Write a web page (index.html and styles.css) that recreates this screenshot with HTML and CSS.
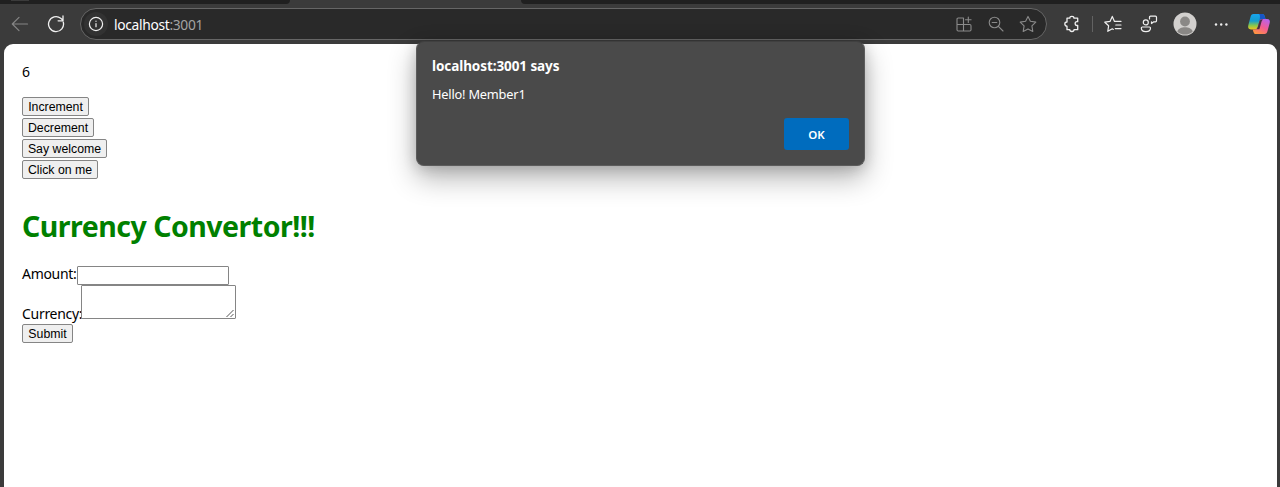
FILE: index.html
```html
<!DOCTYPE html>
<html lang="en">
<head>
<meta charset="utf-8">
<title>localhost:3001</title>
<link rel="stylesheet" href="styles.css">
</head>
<body>
<div class="browser">
  <div class="tabstrip"><div class="tabs-left"><i class="favicon"></i></div><div class="tab"></div><div class="tabs-right"></div></div>
  <header class="toolbar">
    <svg class="icon back" width="18" height="18" viewBox="0 0 18 18"><path d="M16.500 9H1.500M8 2.300 1.300 9 8 15.700"/></svg>
    <svg class="icon reload" width="18" height="18" viewBox="0 0 18 18"><path d="M16.300 7.200A7.500 7.500 0 1 1 13.700 3.200L16 5.300M16 1v4.800h-4.900"/></svg>
    <div class="address">
      <span class="info"><svg class="icon" width="16" height="16" viewBox="0 0 16 16"><circle cx="8" cy="8" r="6.600"/><path d="M8 7.500v3.200M8 5v.3"/></svg></span>
      <span class="url"><b>localhost</b>:3001</span>
      <svg class="icon dim" width="18" height="18" viewBox="0 0 18 18"><path d="M8.500 3H3.200Q2 3 2 4.200v10.600Q2 16 3.200 16h11.600Q16 16 16 14.800V10.700Q16 9.500 14.800 9.500H2M8.500 3v13M13.300 2v5.500M10.500 4.700h5.600"/></svg>
      <svg class="icon dim" width="18" height="18" viewBox="0 0 18 18"><circle cx="7.500" cy="7.500" r="5.300"/><path d="M11.400 11.400 16 16M5.200 7.500h4.600"/></svg>
      <svg class="icon dim" width="18" height="18" viewBox="0 0 18 18"><path d="m9 1.400 2.400 4.900 5.400.8-3.900 3.800.9 5.500L9 13.900l-4.800 2.500.9-5.500-3.900-3.800 5.400-.8z"/></svg>
    </div>
    <svg class="icon puzzle" width="18" height="18" viewBox="0 0 18 18"><path d="M4 3.200h2.800C6.800.8 11 .8 11 3.200h3.700V6.700h-.7c-2.500 0-2.500 3.800 0 3.800h.7v4.200H11c0 2.400-4.200 2.400-4.200 0H4v-3.500C1.100 11.200 1.100 7 4 7z"/></svg>
    <i class="divider"></i>
    <svg class="icon favs" width="18" height="18" viewBox="0 0 18 18"><path d="M11 6.400H17M11.800 10H17M11.300 13.600H17M12 6.400H10.500L8.300 1.400 6 6.400l-5.200.8 3.800 3.600-.8 5.500 4.500-2.500 1 .6"/></svg>
    <svg class="icon people" width="18" height="18" viewBox="0 0 18 18"><circle cx="5.800" cy="7.400" r="2.500"/><path d="M2.300 12h7.200q1 0 1 1c0 4.800-9.200 4.800-9.200 0q0-1 1-1zM9.500 4V2.200q0-1 1-1h5q1 0 1 1v3.600q0 1-1 1h-1.700L11.500 8.500V6.800"/></svg>
    <svg class="avatar" width="24" height="24" viewBox="0 0 24 24"><circle cx="12" cy="12" r="11.500" fill="#d2d0ce"/><circle cx="12" cy="9.500" r="4.900" fill="#8a8886"/><path d="M4.300 19.400c1.700-5.600 13.700-5.600 15.400 0A11 11 0 0 1 4.300 19.400z" fill="#8a8886"/></svg>
    <svg class="dots" width="16" height="16" viewBox="0 0 16 16" fill="#eee"><circle cx="3" cy="8.500" r="1.200"/><circle cx="8.200" cy="8.500" r="1.200"/><circle cx="13.400" cy="8.500" r="1.200"/></svg>
    <svg class="copilot" width="24" height="24" viewBox="0 0 24 24">
      <defs>
        <linearGradient id="cool" x1="0" y1="0" x2="0" y2="1"><stop stop-color="#18a5ef"/><stop offset=".45" stop-color="#159dcc"/><stop offset=".75" stop-color="#8bc84a"/><stop offset="1" stop-color="#f2c51c"/></linearGradient>
        <linearGradient id="warm" x1=".8" y1="0" x2=".2" y2="1"><stop stop-color="#b862ed"/><stop offset=".5" stop-color="#f35c93"/><stop offset="1" stop-color="#ff963d"/></linearGradient>
      </defs>
      <path d="M6.500 2h8.600c1.600 0 2.200 1 2.700 2.600L18.500 7h-3c-2 0-2.700 1-3.200 2.700l-1.600 5.600c-.5 1.500-1.400 2.200-3 2.200H4c-2.600 0-3.300-1.900-2.700-4.200L3.500 5C4 3 4.700 2 6.500 2z" fill="url(#cool)"/>
      <path d="M12 2h3.100c1.600 0 2.200 1 2.700 2.600L18.500 7h-3c-2 0-2.700 1-3.200 2.700C13 6 13.500 3 12 2z" fill="#1755c7"/>
      <path d="M17.500 22H9c-1.600 0-2.200-1-2.700-2.600l-.6-1.900h2c1.600 0 2.500-.7 3-2.200l1.600-5.600C12.800 8 13.500 7 15.500 7H20c2.600 0 3.300 1.700 2.700 4l-2.200 8c-.5 2-1.200 3-3 3z" fill="url(#warm)"/>
      <path d="M14.200 7.500c-1.200.5-1.600 1.300-1.900 2.200L10.700 15.300c-.4 1-.8 1.600-1.500 1.900h3.200l1.900-6.700c.3-1.200.8-2.300 2-3z" fill="#45303f"/>
    </svg>
  </header>
  <main class="page">
    <p class="count">6</p>
    <div class="buttons">
      <button class="btn increment">Increment</button>
      <button class="btn decrement">Decrement</button>
      <button class="btn welcome">Say welcome</button>
      <button class="btn click">Click on me</button>
    </div>
    <h1 class="heading"><span>Currency Convertor!!!</span></h1>
    <form class="form">
      <div class="row amount"><label><span>Amount:</span></label><input class="field" type="text"></div>
      <div class="row currency"><label><span>Currency:</span></label><div class="area"><svg width="9" height="9" viewBox="0 0 9 9"><path d="M.5 8 7.500 1M4.500 8 7.500 5"/></svg></div></div>
      <button class="btn submit" type="button">Submit</button>
    </form>
  </main>
  <section class="dialog">
    <h2 class="dialog-title"><span>localhost:3001 says</span></h2>
    <p class="dialog-text"><span>Hello! Member1</span></p>
    <button class="ok">OK</button>
  </section>
</div>
</body>
</html>
```
FILE: styles.css
```css
* { box-sizing: border-box; }
body { margin: 0; font-family: "Noto Sans", "Open Sans", sans-serif; }
.browser { position: relative; display: flex; flex-direction: column; width: 1280px; height: 487px; overflow: hidden; background: #3b3b3b; }

.tabstrip { display: flex; height: 4px; }
.tabs-left { width: 290px; padding-left: 11px; background: #202020; border-bottom-right-radius: 4px; }
.favicon { display: block; width: 18px; height: 1px; background: #3b3b3b; }
.tab { width: 231px; }
.tabs-right { flex: 1; background: #202020; border-bottom-left-radius: 4px; }

.toolbar { display: flex; align-items: center; height: 40px; padding-left: 11px; }
.icon { flex: none; fill: none; stroke: #f0f0f0; stroke-width: 1.2; stroke-linecap: round; stroke-linejoin: round; }
.back { stroke: #858585; }
.reload { margin-left: 18px; stroke-width: 1.3; }
.address { display: flex; align-items: center; width: 967px; height: 32px; margin-left: 15px; padding: 0 9px 0 3px; border: 1px solid #666; border-radius: 16px; background: #292929; }
.info { display: grid; place-items: center; width: 24px; height: 24px; border-radius: 50%; background: #323232; }
.url { flex: 1; margin-left: 6px; color: #a3a3a3; font-size: 13.8px; letter-spacing: -.32px; }
.url b { color: #fff; font-weight: 400; }
.dim { margin-left: 14px; stroke: #8a8a8a; stroke-width: 1.1; }
.puzzle { margin-left: 16px; stroke-width: 1.3; }
.divider { width: 1px; height: 16px; margin-left: 11px; background: #626262; }
.favs { margin-left: 11px; }
.people { margin-left: 18px; }
.avatar { margin-left: 15px; }
.dots { margin-left: 16px; }
.copilot { margin-left: 18px; }

.page { flex: 1; width: 1273px; margin-left: 4px; padding: 17px 18px; border-radius: 9px 9px 0 0; background: #fff; color: #000; font-size: 14px; }
.count { height: 21px; margin: 0 0 15px; line-height: 21px; }
.buttons { display: flex; flex-direction: column; align-items: flex-start; gap: 2px; }
.btn { display: block; height: 19px; padding: 0; border: 1px solid #858585; border-radius: 2px; background: #efefef; color: #000; font: 12.3px/16px "Liberation Sans", Arial, sans-serif; white-space: nowrap; }
.increment { width: 67px; }
.decrement { width: 72px; }
.welcome { width: 85px; }
.click { width: 76px; }
.heading { height: 40px; margin: 27px 0 20px; color: #008000; font-size: 28.5px; line-height: 40px; letter-spacing: -.5px; white-space: nowrap; }
.row { display: flex; }
.row label { flex: none; white-space: nowrap; letter-spacing: -.3px; }
.amount label { width: 55px; height: 19px; line-height: 16px; }
.currency label { width: 59px; padding-top: 19px; line-height: 20px; }
.field { width: 152px; height: 19px; padding: 0; border: 1px solid #858585; border-radius: 1px; }
.area { display: flex; align-items: flex-end; justify-content: flex-end; width: 155px; height: 34px; border: 1px solid #858585; border-radius: 1px; }
.area svg { fill: none; stroke: #555; stroke-width: 1; }
.currency { height: 39px; }
.submit { width: 51px; }

.dialog { position: absolute; top: 41px; left: 416px; display: flex; flex-direction: column; width: 449px; height: 125px; padding: 14px 15px; border: 1px solid #5c5c5c; border-top-color: #404040; border-radius: 8px; background: #4a4a4a; color: #fff; box-shadow: 0 12px 28px rgba(0,0,0,.3), 0 2px 14px rgba(0,0,0,.16); }
.dialog-title { margin: 0; font-size: 13.5px; line-height: 20px; letter-spacing: -.08px; }
.dialog-text { margin: 8px 0 14px; font-size: 12.8px; line-height: 20px; letter-spacing: -.2px; }
.ok { align-self: flex-end; width: 65px; height: 32px; padding: 0; border: 0; border-radius: 3px; background: #006cbe; color: #fff; font: 600 11.5px "Noto Sans", sans-serif; }
```
